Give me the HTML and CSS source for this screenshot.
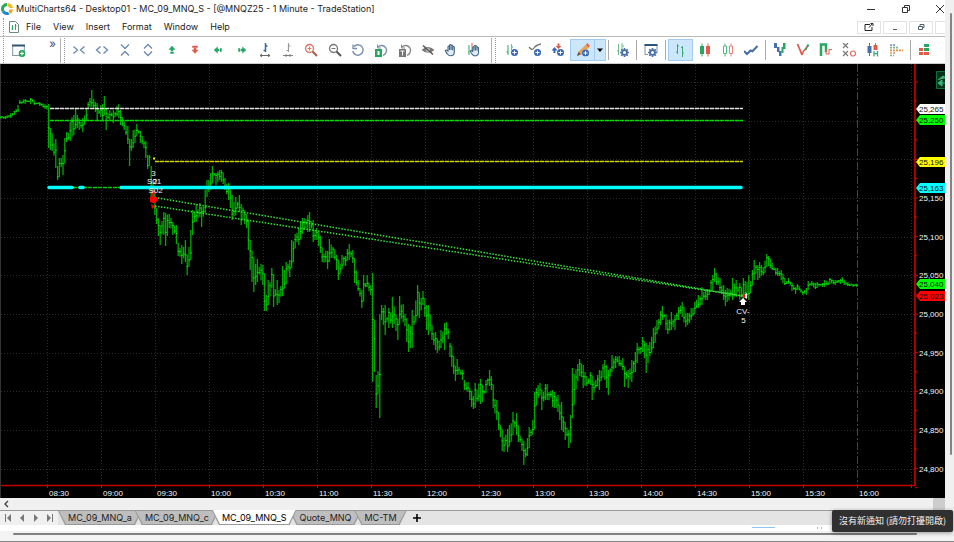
FILE: index.html
```html
<!DOCTYPE html>
<html lang="en">
<head>
<meta charset="utf-8">
<title>MultiCharts64</title>
<link rel="stylesheet" href="styles.css">
</head>
<body>
<svg class="defs" aria-hidden="true">
  <defs>
    <symbol id="plus-dot" viewBox="0 0 8 8"><circle cx="4" cy="4" r="4"/><path d="M4 1.6v4.8M1.6 4h4.8" stroke="#fff" stroke-width="1.2"/></symbol>
    <symbol id="gear" viewBox="0 0 10 10"><circle cx="5" cy="5" r="2.7" fill="none" stroke="#4a6ea8" stroke-width="2"/><path d="M5 0v2M5 8v2M0 5h2M8 5h2M1.4 1.4l1.5 1.5M7.1 7.1l1.5 1.5M8.6 1.4L7.1 2.9M2.9 7.1L1.4 8.6" stroke="#4a6ea8" stroke-width="1.8"/></symbol>
    <symbol id="hand" viewBox="0 0 14 14"><path d="M4 8V3.6q.9-1.2 1.5 0V7V2.2q.9-1.2 1.6 0V7V2.5q.9-1.1 1.6 0V7.3V4q1-1 1.6 0v5q0 3.8-3.8 3.8Q4.200 12.800 3 10.600L1.300 7.800q.6-1.500 1.900-.2z" fill="#e4edf4" stroke="#3e6283" stroke-width="1.100"/></symbol>
  </defs>
</svg>
<div class="screen">
  <main class="window">
    <header class="titlebar">
      <svg class="logo" viewBox="0 0 12 12"><path d="M6 0A6 6 0 0 0 .8 9L3.400 7.500A3 3 0 0 1 6 3z" fill="#2aa85a"/><path d="M.8 9A6 6 0 0 0 8.500 11.400L7 8.700A3 3 0 0 1 3.400 7.500z" fill="#1e88d2"/><path d="M7 0A6 6 0 0 1 12 5H8.700L7 3.400z" fill="#f4c020"/><path d="M12 6.500A6 6 0 0 1 9.500 11L7.500 8.300 8.700 6.500z" fill="#f0a41c"/></svg>
      <h1>MultiCharts64 - Desktop01 - MC_09_MNQ_S - [@MNQZ25 - 1 Minute - TradeStation]</h1>
      <div class="controls">
        <button aria-label="Minimize"><svg viewBox="0 0 10 10"><path d="M1 5.500h8"/></svg></button>
        <button aria-label="Restore"><svg viewBox="0 0 10 10"><path d="M1.500 3.500h5v5h-5zM3.500 3.500v-2h5v5h-2"/></svg></button>
        <button aria-label="Close"><svg viewBox="0 0 10 10"><path d="M1 1l8 8M9 1L1 9"/></svg></button>
      </div>
    </header>
    <nav class="menubar">
      <span class="grip"></span>
      <svg class="doc" viewBox="0 0 10 12"><path d="M.5.5h6l3 3v8h-9z" fill="#fff" stroke="#6c8c80"/><path d="M3.500 4v5M2.500 8h1M6.500 3v6M6.500 5h1" stroke="#27a661" fill="none"/></svg>
      <button>File</button><button>View</button><button>Insert</button><button>Format</button><button>Window</button><button>Help</button>
      <div class="mdi">
        <button aria-label="Pop out"><svg viewBox="0 0 10 10"><path d="M6 2.500H1v6h7V5M5 5.500l3.500-4M6.500 1.500h2.500V4" stroke="#222"/></svg></button>
        <button aria-label="Minimize chart"><svg viewBox="0 0 10 10"><path d="M3 7.500h4" stroke="#50606c"/></svg></button>
        <button aria-label="Restore chart"><svg viewBox="0 0 10 10"><path d="M2.500 4.500h4v3h-4zM4 4V2.500h4v3H7" stroke="#50606c"/></svg></button>
        <button class="cut" aria-label="Close chart"></button>
      </div>
    </nav>
    <div class="toolbar">
      <div class="lead">
        <span class="grip"></span>
        <button aria-label="New window"><svg viewBox="0 0 14 14"><path d="M.7 12V1.500h11.600V7M.7 11.500H7" fill="none" stroke="#8296a3"/><path d="M0 1.500h13" stroke="#2d5475" stroke-width="2"/><use href="#plus-dot" x="6.500" y="6" width="7" height="7" fill="#20a45a"/></svg></button>
        <span class="more">»</span>
      </div>
      <span class="split"></span>
      <button class="t" aria-label="Narrow bars"><svg viewBox="0 0 14 14"><path d="M1.500 3.500L5.500 7l-4 3.500M12.500 3.500L8.500 7l4 3.500" class="nav"/></svg></button>
      <button class="t" aria-label="Widen bars"><svg viewBox="0 0 14 14"><path d="M5.500 3.500L1.500 7l4 3.500M8.500 3.500l4 3.500-4 3.500" class="nav"/></svg></button>
      <button class="t" aria-label="Compress scale"><svg viewBox="0 0 14 14"><path d="M3 1.500L7 5.500l4-4M3 12.500l4-4 4 4" class="nav"/></svg></button>
      <button class="t" aria-label="Expand scale"><svg viewBox="0 0 14 14"><path d="M3 5.500l4-4 4 4M3 8.500l4 4 4-4" class="nav"/></svg></button>
      <button class="t" aria-label="Up"><svg viewBox="0 0 14 14"><path d="M7 3L4 6.500h2V8h2V6.500h2zM5.500 9h3v1.500h-3z" fill="#27a767" stroke="#27a767" stroke-width=".5"/></svg></button>
      <button class="t" aria-label="Down"><svg viewBox="0 0 14 14"><path d="M7 10.500L4 7h2V5h2v2h2zM4.500 3h5v1.500h-5z" fill="#e15b48" stroke="#e15b48" stroke-width=".5"/></svg></button>
      <button class="t" aria-label="Left"><svg viewBox="0 0 14 14"><path d="M3 7l3.500-3v2H8v2H6.500v2zM9 5.500h1.500v3H9z" fill="#27a767" stroke="#27a767" stroke-width=".5"/></svg></button>
      <button class="t" aria-label="Right"><svg viewBox="0 0 14 14"><path d="M11 7L7.500 4v2H6v2h1.500v2zM3.500 5.500H5v3H3.500z" fill="#27a767" stroke="#27a767" stroke-width=".5"/></svg></button>
      <button class="t" aria-label="Bar spacing up"><svg viewBox="0 0 14 14"><path d="M7.500 0v9M5.500 7.500h2M7.500 3h2" stroke="#34679f" stroke-width="1.500"/><path d="M2 12.500h10M4 11l-2 1.500L4 14M10 11l2 1.500-2 1.500" fill="none" stroke="#666"/></svg></button>
      <button class="t" aria-label="Bar spacing down"><svg viewBox="0 0 14 14"><path d="M7.500 0v9M5.500 7.500h2M7.500 3h2" stroke="#999" stroke-width="1.200"/><path d="M2 12.500h10M4.500 11L6 12.500 4.500 14M9.500 11L8 12.500 9.500 14" fill="none" stroke="#666" stroke-width=".8"/></svg></button>
      <button class="t" aria-label="Zoom in"><svg viewBox="0 0 14 14"><circle cx="5.500" cy="5.500" r="4" fill="none" stroke="#dc7561" stroke-width="1.300"/><path d="M3.500 5.500h4M5.500 3.500v4" stroke="#dc7561"/><path d="M8.500 8.500l4.500 4.500" stroke="#a35d4c" stroke-width="2"/></svg></button>
      <button class="t" aria-label="Zoom out"><svg viewBox="0 0 14 14"><circle cx="5.500" cy="5.500" r="4" fill="none" stroke="#777" stroke-width="1.300"/><path d="M3.500 5.500h4" stroke="#777"/><path d="M8.500 8.500l4.500 4.500" stroke="#555" stroke-width="2"/></svg></button>
      <button class="t" aria-label="Reset"><svg viewBox="0 0 14 14"><path d="M3 3.500A5.200 5.200 0 1 1 1.800 8" fill="none" stroke="#7890b4" stroke-width="1.400"/><path d="M2 1.500v4h4" fill="none" stroke="#7890b4" stroke-width="1.300"/></svg></button>
      <button class="t" aria-label="Reset scale"><svg viewBox="0 0 14 14"><path d="M4 4A5 5 0 1 1 9 12.300" fill="none" stroke="#7890b4" stroke-width="1.400"/><path d="M3.500 1.500V5H7" fill="none" stroke="#7890b4"/><path d="M1 6h7v8H1z" fill="#27a661"/><path d="M3.500 8h2v4h-2z" fill="#fff"/></svg></button>
      <button class="t" aria-label="Reset time"><svg viewBox="0 0 14 14"><path d="M4 4A5 5 0 1 1 9 12.300" fill="none" stroke="#888" stroke-width="1.400"/><path d="M3.500 1.500V5H7" fill="none" stroke="#888"/><path d="M1 6h7v8H1z" fill="#777"/><path d="M2.500 8h4M4.500 8v4.500" stroke="#fff"/></svg></button>
      <button class="t" aria-label="Hide"><svg viewBox="0 0 14 14"><path d="M.5 7Q7 1 13.500 7 7 12.500.5 7z" fill="#777"/><circle cx="7" cy="7" r="2" fill="#ccc"/><path d="M2 2.500l10 9" stroke="#555" stroke-width="1.500"/></svg></button>
      <button class="t" aria-label="Pan"><svg viewBox="0 0 14 14"><use href="#hand" width="14" height="14"/></svg></button>
      <button class="t" aria-label="Pan chart"><svg viewBox="0 0 14 14"><path d="M2 2v10M1 9h1" stroke="#27a661"/><path d="M5 0v8" stroke="#e15b48"/><use href="#hand" x="2" y="1" width="13" height="13"/></svg></button>
      <span class="split wide"></span>
      <button class="t" aria-label="Insert instrument"><svg viewBox="0 0 14 14"><path d="M3 2v10M1.500 9H3M6.500 4H8" stroke="#27a661" fill="none"/><path d="M6.500 1v6" stroke="#e38470"/><use href="#plus-dot" x="6" y="6" width="7" height="7" fill="#3767b1"/></svg></button>
      <button class="t" aria-label="Insert study"><svg viewBox="0 0 14 14"><path d="M1 4q3 4 5 1t7-4" fill="none" stroke="#777" stroke-width="1.300"/><use href="#plus-dot" x="6" y="6" width="7" height="7" fill="#3767b1"/></svg></button>
      <button class="t" aria-label="Insert signal"><svg viewBox="0 0 14 14"><path d="M3.500 4L.5 7.500h2V10h2V7.500h2z" fill="#3767b1"/><path d="M7.500 6L4.500 3h2V.5h2V3h2z" fill="#e15b48"/><use href="#plus-dot" x="6" y="6" width="7" height="7" fill="#3767b1"/></svg></button>
      <button class="t on" aria-label="Drawing tool"><svg viewBox="0 0 14 14"><path d="M1 13l1.500-4.500 7.500-7 3 3-7.500 7z" fill="#e4a653"/><path d="M10 1.500L11.500 0 14 3l-1.500 1.500z" fill="#dc6a5c"/><path d="M1 13l1.500-4 2.300 2.300z" fill="#555"/><use href="#plus-dot" x="6" y="6.500" width="7" height="7" fill="#3767b1"/></svg></button>
      <button class="drop on" aria-label="Drawing tool options"><svg viewBox="0 0 6 4"><path d="M0 .5h6L3 4z"/></svg></button>
      <span class="sep"></span>
      <button class="t" aria-label="Format instrument"><svg viewBox="0 0 14 14"><path d="M2.500 1v11M1 8h1.500M6 0v7M6 3h2" stroke="#6bbd91"/><use href="#gear" x="4" y="5" width="9" height="9"/></svg></button>
      <span class="sep"></span>
      <button class="t" aria-label="Format window"><svg viewBox="0 0 14 14"><path d="M1 12V2h12v8M1 11.500h3" fill="none" stroke="#8296a3"/><path d="M.5 2h13" stroke="#2d5475" stroke-width="2"/><use href="#gear" x="4" y="5" width="9" height="9"/></svg></button>
      <span class="sep"></span>
      <button class="t on" aria-label="OHLC bars"><svg viewBox="0 0 14 14"><path d="M4.500 1v10M3 9h1.500M4.500 3H6M9.500 3v11M8 4.500h1.500M9.500 10H11" stroke="#36ac78"/></svg></button>
      <button class="t" aria-label="Candlesticks"><svg viewBox="0 0 14 14"><path d="M4 .5v13" stroke="#27a661"/><path d="M2 3h4v8H2z" fill="#27a661"/><path d="M10 .5v13" stroke="#e15b48"/><path d="M8 3h4v8H8z" fill="#e15b48"/></svg></button>
      <button class="t" aria-label="Hollow candlesticks"><svg viewBox="0 0 14 14"><path d="M4 .5V3M4 10.500v3M2.500 3h3v7.500h-3z" fill="none" stroke="#50b98a"/><path d="M10 .5V3M10 10.500v3M8.500 3h3v7.500h-3z" fill="none" stroke="#e78375"/></svg></button>
      <button class="t" aria-label="Line"><svg viewBox="0 0 14 14"><path d="M0 8l3 3 3.500-3.500 2 .8L13.500 3" fill="none" stroke="#456da8" stroke-width="2"/></svg></button>
      <span class="sep"></span>
      <button class="t" aria-label="Renko"><svg viewBox="0 0 14 14"><path d="M1 0h3v5H1zM4 4h2.500v5H4zM6 8h2.500v5H6z" fill="#4771ae"/><path d="M8.500 4h2v6h-2zM10 0h2.500v6H10z" fill="#27a661"/></svg></button>
      <button class="t" aria-label="Line break"><svg viewBox="0 0 14 14"><path d="M1.500 1l2.500 6 2 5" fill="none" stroke="#e15b48" stroke-width="1.800"/><path d="M6 12l1.500-4 2.500-2 2-4" fill="none" stroke="#e15b48" stroke-width="1.500"/><path d="M9 6.500l1.500-1.500M11 4l1.500-2.500" stroke="#27a661" stroke-width="2"/></svg></button>
      <button class="t" aria-label="Kagi"><svg viewBox="0 0 14 14"><path d="M2 13V1.500h5V9" fill="none" stroke="#27a661" stroke-width="2.500"/><path d="M7 6v5h3V6.500h3" fill="none" stroke="#e15b48"/></svg></button>
      <button class="t" aria-label="Point and figure"><svg viewBox="0 0 14 14"><path d="M1 0l5 5M6 0L1 5M1 8l5 5M6 8l-5 5" stroke="#777" stroke-width="1.200"/><circle cx="11" cy="10.500" r="2.500" fill="none" stroke="#df6f62" stroke-width="1.200"/></svg></button>
      <button class="t" aria-label="Heikin Ashi"><svg viewBox="0 0 14 14"><path d="M3.500 0v13" stroke="#4771ae"/><path d="M1.500 3h4v7h-4z" fill="#4771ae"/><path d="M9.500 0v3" stroke="#e15b48"/><path d="M7.500 2h4v5h-4z" fill="#e15b48"/><path d="M8 8v5.500M11.500 8v5.500M8 10.700h3.500" stroke="#41a977" stroke-width="1.300"/></svg></button>
      <button class="t" aria-label="Volume profile"><svg viewBox="0 0 14 14"><g fill="none" stroke-width="1.700" stroke-dasharray="2 1"><path d="M1 2h6" stroke="#668dbd"/><path d="M1 4.700h9" stroke="#7fb592"/><path d="M1 7.400h13" stroke="#dd913f"/><path d="M1 10h6" stroke="#de9a66"/><path d="M1 12.500h4" stroke="#7fb592"/></g></svg></button>
      <span class="sep"></span>
      <button class="t" aria-label="Depth of market"><svg viewBox="0 0 14 14"><path d="M7 1h5v3H7zM7 5h5v3H7z" fill="#27a661"/><path d="M2 5h4v3H2zM2 9h4v3H2zM7 9h5v3H7z" fill="#e15b48"/></svg></button>
    </div>
    <svg class="chart" id="chart" viewBox="0 64 945 434" role="img" aria-label="@MNQZ25 one minute chart"></svg>
    <div class="hscroll"><button aria-label="Scroll left"><svg viewBox="0 0 6 8"><path d="M5 1L2 4l3 3"/></svg></button><span class="thumb"></span></div>
    <div class="tabs">
      <div class="steps">
        <button aria-label="First tab"><svg viewBox="0 0 8 8"><path d="M1 0h1v8H1zM7 0v8L3 4z"/></svg></button>
        <button aria-label="Previous tab"><svg viewBox="0 0 8 8"><path d="M6 0v8L2 4z"/></svg></button>
        <button aria-label="Next tab"><svg viewBox="0 0 8 8"><path d="M2 0v8l4-4z"/></svg></button>
        <button aria-label="Last tab"><svg viewBox="0 0 8 8"><path d="M6 0h1v8H6zM1 0v8l4-4z"/></svg></button>
      </div>
      <button class="tab">MC_09_MNQ_a</button><button class="tab">MC_09_MNQ_c</button><button class="tab active">MC_09_MNQ_S</button><button class="tab">Quote_MNQ</button><button class="tab">MC-TM</button>
      <button class="add" aria-label="Add tab"><svg viewBox="0 0 8 8"><path d="M4 0v8M0 4h8"/></svg></button>
    </div>
    <div class="status"><span class="mark"></span><span class="tick"></span></div>
  </main>
  <aside class="vscroll"><span></span></aside>
</div>
<footer class="outer"><span></span></footer>
<div class="toast" role="status">沒有新通知 (請勿打擾開啟)</div>
<script src="chart.js"></script>
</body>
</html>
```
FILE: styles.css
```css
* { box-sizing: border-box; }
body {
  margin: 0;
  min-height: 100vh;
  display: flex;
  flex-direction: column;
  background: #f0f0f0;
  color: #222;
  font: 9px/14px Inter, "Noto Sans CJK TC", sans-serif;
  overflow: hidden;
}
button {
  border: 0;
  padding: 0;
  background: none;
  color: inherit;
  font: inherit;
  display: flex;
  align-items: center;
  justify-content: center;
}
svg { display: block; flex: none; }
.defs { position: absolute; width: 0; height: 0; }
.screen { display: flex; }
.window { flex: 1; min-width: 0; background: #fff; }

.titlebar { display: flex; align-items: center; height: 18px; overflow: hidden; }
.logo { width: 12px; height: 12px; margin: 0 3px 0 1px; }
h1 { margin: 0; font-size: 9px; font-weight: 400; white-space: nowrap; }
.controls { display: flex; margin-left: auto; }
.controls button { width: 35px; }
.controls button:last-child { width: 22px; justify-content: flex-end; }
.controls svg { width: 10px; height: 10px; fill: none; stroke: #333; stroke-width: 1; }

.menubar {
  display: flex;
  align-items: center;
  gap: 12px;
  height: 19px;
  border-bottom: 1px solid #bbb;
}
.grip { width: 2px; align-self: stretch; margin-left: 3px; border-left: 1px dotted #999; }
.menubar .grip { margin-right: -8px; }
.doc { width: 10px; height: 12px; margin-right: -5px; }
.mdi { display: flex; gap: 2px; margin-left: auto; }
.mdi button { width: 24px; height: 13px; border: 1px solid #e2e2e2; }
.mdi .cut { width: 10px; border-right: 0; }
.mdi svg { width: 10px; height: 10px; fill: none; }

.toolbar { display: flex; align-items: center; height: 27px; padding-right: 9px; border-bottom: 1px solid #ccc; }
.lead { display: flex; align-items: center; align-self: stretch; width: 60px; padding-top: 1px; gap: 7px; }
.lead svg, .t svg { width: 14px; height: 14px; }
.more { margin-left: auto; margin-bottom: 14px; padding-right: 4px; color: #4a5284; font-size: 12px; }
.split { width: 7px; height: 25px; border-left: 1px solid #b4b4b4; position: relative; }
.split::after { content: ""; position: absolute; left: 3px; top: 0; bottom: 0; border-left: 1px dotted #999; }
.split.wide { width: 9px; margin-left: 5px; }
.t { flex: 1 1 0; height: 22px; }
.nav { fill: none; stroke: #6a88ae; stroke-width: 1.3; }
.on { background: #cce6fc; border: 1px solid #a3cdf0; }
.drop { width: 11px; height: 22px; border-left: 0; }
.drop svg { width: 6px; height: 4px; }
.sep { width: 5px; height: 20px; background: linear-gradient(#aaa, #aaa) 2px 0 / 1px 100% no-repeat; }

.chart { width: 100%; height: auto; background: #000; }
.chart text { font: 8px "Liberation Sans", sans-serif; fill: #f4f4f4; }
.chart .dark { fill: #111; }
.chart .mid { text-anchor: middle; }

.hscroll { display: flex; justify-content: space-between; height: 13px; background: #f0f0f0; border-bottom: 1px solid #999; }
.hscroll button { width: 12px; }
.hscroll svg { width: 6px; height: 8px; fill: none; stroke: #444; stroke-width: 1.4; }
.thumb { width: 12px; background: #cdcdcd; }

.tabs { display: flex; height: 14px; background: #e4e4e4; }
.steps { display: flex; width: 58px; padding: 0 1px; background: #f0f0f0; }
.steps button { width: 14px; }
.steps svg { width: 8px; height: 8px; fill: #777; }
.tab { position: relative; z-index: 0; padding: 0 10px; margin-right: -7px; line-height: 14px; }
.tab::before, .tab::after {
  content: "";
  position: absolute;
  inset: 0;
  z-index: -2;
  background: #999;
  clip-path: polygon(0 0, 100% 0, calc(100% - 7px) 100%, 7px 100%);
}
.tab::after { inset: 0 1px 1px; z-index: -1; background: #bebebe; }
.tab.active { z-index: 1; margin-top: -1px; color: #000; }
.tab.active::after { background: #fff; }
.add { margin-left: 13px; }
.add svg { width: 8px; height: 8px; fill: none; stroke: #000; stroke-width: 1.6; }

.status { display: flex; justify-content: flex-end; height: 6px; padding: 2px 123px 0 0; }
.mark { width: 23px; height: 1px; margin-right: 42px; background: #8fc6f0; }
.tick { width: 5px; height: 2px; border: solid #bbb; border-width: 0 1px; }
.vscroll { width: 9px; padding: 13px 2px 76px 5px; background: #f0f0f0; display: flex; }
.vscroll span { flex: 1; background: #848484; border-radius: 1px; }
.outer { flex: 1; padding: 2px 37px 0 13px; border-bottom: 1px solid #888; background: #f3f3f3; }
.outer span { display: block; height: 2px; background: #808080; border-radius: 1px; }
.toast {
  position: absolute;
  right: 1px;
  bottom: 10px;
  padding: 4px 7px;
  border-radius: 2px;
  background: #303030;
  color: #eee;
  font: 9px/14px "Noto Sans CJK TC", sans-serif;
  box-shadow: 0 1px 4px #0006;
}
```
FILE: chart.js
```js
const chart = document.getElementById("chart");
const NS = "http://www.w3.org/2000/svg";

function add(tag, attrs, text) {
  const el = document.createElementNS(NS, tag);
  for (const key in attrs) el.setAttribute(key, attrs[key]);
  if (text) el.textContent = text;
  chart.append(el);
}

// Session range samples: x, high, low
const range = `0 116 119,6 116 119,10 113 118,15 111 115,18 105 112,20 100 104,25 99 104,30 98 104,35 101 105,40 102 106,45 104 109,48 104 112,49 104 148,51 140 150,53 136 151,55 139 168,58 166 180,60 158 175,63 155 175,65 138 158,67 132 142,70 122 141,73 115 135,75 109 125,78 115 128,80 122 130,83 118 132,86 108 120,88 102 108,90 98 107,92 90 107,95 102 112,98 103 120,100 105 117,103 104 121,105 96 112,106 110 130,110 110 121,114 110 123,118 104 118,121 110 125,124 121 130,127 126 144,130 143 166,133 130 148,137 124 136,141 131 143,145 141 158,147 155 169,150 155 162,152 166 200,154 198 215,156 213 224,158 218 236,160 225 245,163 212 235,166 213 246,169 214 228,173 222 235,176 225 244,179 243 256,182 245 264,185 240 262,187 255 275,190 230 260,193 210 235,196 204 222,199 203 217,202 207 227,205 190 213,207 180 197,210 173 190,213 166 178,216 173 185,219 170 180,222 170 182,225 178 190,228 183 200,231 195 208,233 195 220,236 197 215,239 195 212,242 204 225,246 215 228,248 220 250,250 250 270,253 266 292,258 259 282,262 265 285,265 285 311,267 295 311,269 280 300,272 268 288,274 283 307,277 280 305,279 290 303,282 280 296,283 266 290,287 262 276,290 260 277,292 240 265,295 234 247,298 228 245,302 218 234,305 218 230,308 215 232,310 212 232,313 220 242,317 228 240,320 236 253,323 248 262,327 251 269,330 239 262,333 247 258,337 255 270,339 260 280,342 255 265,345 256 266,349 244 260,352 250 263,355 261 283,358 280 291,362 290 308,364 275 298,367 275 287,370 285 295,372 282 298,373 273 382,375 338 372,377 375 408,379 340 418,380 314 360,382 305 320,383 308 325,385 305 335,388 308 328,392 305 328,393 297 320,397 320 340,400 296 318,403 304 322,407 318 342,409 324 352,412 310 348,414 316 325,417 285 315,420 296 318,423 291 305,426 305 330,429 305 335,432 328 340,435 332 350,438 340 353,441 330 348,444 323 350,447 322 335,450 343 357,453 357 374,456 370 381,458 359 375,462 370 380,465 380 390,468 382 392,471 391 407,473 396 409,476 383 408,480 379 404,483 388 402,486 380 393,489 370 386,492 376 390,493 388 408,497 400 420,499 418 430,502 430 451,504 437 452,507 429 452,510 425 442,513 412 430,517 413 435,519 430 442,523 441 455,524 442 465,528 438 456,530 427 440,532 420 435,534 392 420,538 385 398,540 383 395,542 395 410,545 384 400,548 384 400,552 390 407,555 392 408,558 395 412,561 402 430,563 418 432,566 425 440,568 430 448,570 415 443,572 390 418,573 368 402,577 364 381,579 359 376,583 365 388,587 376 386,590 372 385,592 378 400,597 375 386,600 370 390,604 360 380,607 365 388,609 370 395,612 355 372,615 356 368,619 356 366,622 358 370,625 368 387,628 370 388,632 360 382,635 352 372,638 343 363,643 337 352,646 343 373,650 342 356,653 328 345,657 320 330,660 311 325,663 306 320,666 314 330,668 320 334,672 312 330,675 315 330,678 307 320,682 302 317,685 313 327,688 313 325,692 308 320,695 302 313,698 295 308,702 287 305,705 290 300,708 289 300,712 275 290,714 268 282,717 273 285,720 278 292,723 285 300,726 290 306,728 288 302,733 278 300,737 280 297,740 283 300,744 278 300,747 282 298,749 275 300,752 270 285,754 260 280,757 265 280,760 262 278,763 267 275,766 254 266,768 256 266,772 263 270,775 268 275,778 268 276,781 270 280,784 279 285,788 278 284,792 284 291,795 287 294,798 284 290,802 291 295,806 288 295,808 281 290,812 281 286,815 283 289,818 282 288,822 283 287,825 280 287,830 278 284,835 280 285,840 279 284,842 277 283,845 281 285,848 282 286,853 284 287,858 282 287`
  .split(",").map(row => row.split(" ").map(Number));

// Grid; the column at 16:00 closes the session
const columns = Array.from({ length: 17 }, (_, i) => 47.5 + i * 54);
const rows = Array.from({ length: 11 }, (_, i) => 82 + i * 38.67);
columns.forEach((x, i) => {
  const session = i === 15;
  add("path", { d: `M${x} 64V485`, stroke: session ? "#444" : "#2b2b2b", "stroke-dasharray": session ? "8 2 2 2" : "1 2" });
});
for (const y of rows) add("path", { d: `M1 ${Math.round(y) + .5}H914`, stroke: "#2b2b2b", "stroke-dasharray": "1 2" });
add("path", { d: "M.5 64V498", stroke: "#333" });

// One bar per minute; a bar that holds a sample keeps its full range
let seed = 11, at = 0, body = "", closes = "", last = 118;
const random = () => (seed = (seed * 16807) % 2147483647) / 2147483647;
for (let x = 0; x <= 857; x += 1.8) {
  while (at < range.length - 2 && range[at + 1][0] < x) at++;
  const [x0, h0, l0] = range[at], [x1, h1, l1] = range[at + 1];
  const k = (x - x0) / (x1 - x0);
  const high = h0 + (h1 - h0) * k, low = l0 + (l1 - l0) * k, span = low - high;
  const held = range.filter(sample => Math.abs(sample[0] - x) <= .9);
  let top = high + span * random() * .45, bottom = low - span * random() * .45;
  if (held.length) {
    top = Math.min(...held.map(sample => sample[1]));
    bottom = Math.max(...held.map(sample => sample[2]));
  }
  if (Math.abs(last - (top + bottom) / 2) < span) {
    top = Math.min(top, last);
    bottom = Math.max(bottom, last);
  }
  const close = top + (bottom - top) * (.2 + random() * .6);
  body += `M${x.toFixed(1)} ${top.toFixed(1)}V${bottom.toFixed(1)}`;
  closes += `M${(x - .6).toFixed(1)} ${close.toFixed(1)}h1.800`;
  last = close;
}
add("path", { d: body, stroke: "#00a800", "stroke-width": 1.3 });
add("path", { d: closes, stroke: "#00e400", "stroke-width": 1 });

// Levels
const level = (from, to, y, stroke) => {
  add("path", { d: `M${from} ${y}H${to}`, stroke, "stroke-opacity": .45 });
  add("path", { d: `M${from} ${y}H${to}`, stroke, "stroke-dasharray": "4 1", "stroke-width": 1.3 });
};
level(50, 743, 108.5, "#e0e0e0");
level(50, 743, 120.5, "#00dc00");
level(155, 743, 161.5, "#d4d400");
add("path", { d: "M153 158.500h2", stroke: "#ee0", "stroke-width": 2 });
add("path", { d: "M73 187.500H119", stroke: "#00c800", "stroke-dasharray": "4 1", "stroke-width": 1.3 });
add("path", { d: "M49 187.500H72M80 187.500H83M121 187.500H741", stroke: "#00ffff", "stroke-width": 3.600, "stroke-linecap": "round" });
for (const y of [197.5, 206]) add("path", { d: `M155 ${y}L743 296`, stroke: "#3be03b", "stroke-width": 1.500, "stroke-dasharray": "1.500 1.500" });

// Orders
add("path", { d: "M153 189l3 3-2 2v3h3l1 3-3 3h-2l-3-1v-5l2-1v-4zM151 204l4 2-3 3z", fill: "#f00" });
add("text", { x: 153.5, y: 176, class: "mid" }, "3");
add("text", { x: 154, y: 184, class: "mid" }, "S01");
add("text", { x: 155, y: 184, class: "mid" }, "2");
add("text", { x: 155.5, y: 193, class: "mid" }, "S02");
add("path", { d: "M742 296l5-3v6z", fill: "#f4f4f4" });
add("path", { d: "M742 296l3-2v4z", fill: "#f00" });
add("path", { d: "M743 298l4 4h-2v3h-4v-3h-2z", fill: "#fff" });
add("text", { x: 743, y: 314, class: "mid" }, "CV-");
add("text", { x: 743.5, y: 323, class: "mid" }, "5");

// Axes
add("path", { d: "M915 64V486", stroke: "#a80000", "stroke-width": 2 });
add("path", { d: "M1 485.500H915", stroke: "#c00000", "stroke-width": 1.4 });
columns.forEach((x, i) => {
  add("path", { d: `M${x} 486v2`, stroke: "#d00" });
  if (i === 16) return;
  const minutes = 510 + i * 30;
  const hour = String(Math.floor(minutes / 60)).padStart(2, "0");
  add("text", { x: x + 1.5, y: 496 }, `${hour}:${minutes % 60 ? "30" : "00"}`);
});
rows.forEach((y, i) => {
  add("path", { d: `M915 ${y}h3M915 ${y + 19}h2`, stroke: "#d00" });
  if (i > 1) add("text", { x: 919, y: Math.round(y) + 3 }, (25300 - i * 50).toLocaleString("en-US"));
});
for (const [value, y, fill] of [["25,265", 109, "#fff"], ["25,250", 120, "#0f0"], ["25,196", 162, "#ff0"], ["25,163", 188, "#0ff"], ["25,040", 284, "#0f0"], ["25,023", 296, "#f00"]]) {
  add("path", { d: `M916 ${y}l4-5H945v10H920z`, fill });
  add("text", { x: 919, y: y + 3, class: "dark" }, value);
}
add("path", { d: "M936.500 71.500H946V88.500H936.500z", fill: "#05301a", stroke: "#0b7434" });
add("path", { d: "M938 80l5-4 3 2M946 83h-4M942 80l-4 3 4 3z", fill: "#36b878", stroke: "#36b878" });
```
